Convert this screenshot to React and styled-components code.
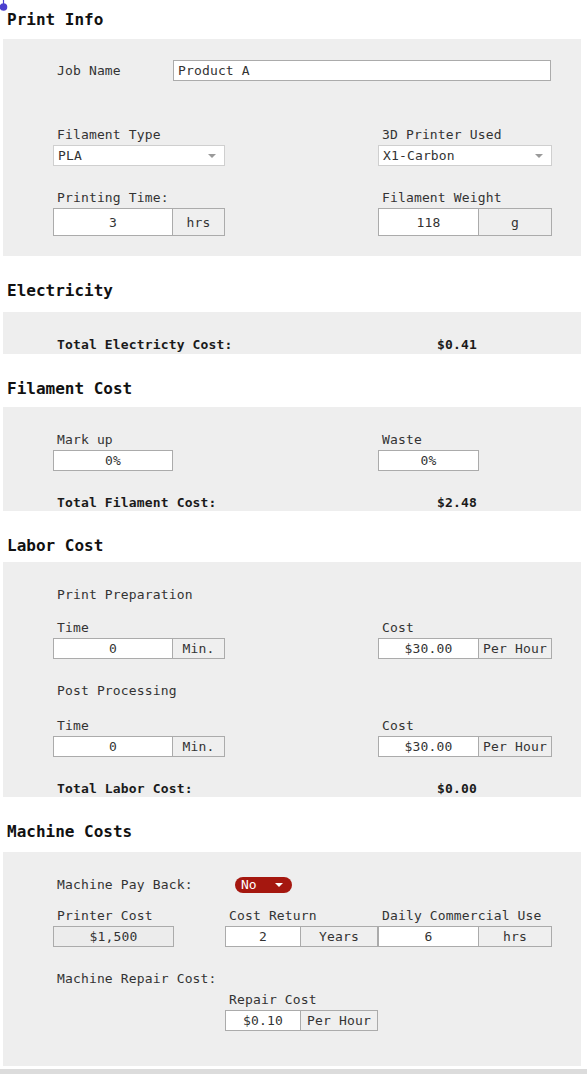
import React from "react";
import styled, { createGlobalStyle } from "styled-components";

const GlobalStyle = createGlobalStyle`
  html, body { margin: 0; padding: 0; background: #ffffff; }
  body { font-family: "DejaVu Sans Mono", "Liberation Mono", monospace; color: #333; }
`;

const Page = styled.div`
  position: relative;
  width: 587px;
  height: 1074px;
  box-sizing: border-box;
  padding: 0 6px 0 3px;
  display: flex;
  flex-direction: column;
  overflow: hidden;
`;

const Pin = styled.svg`
  position: absolute;
  left: 0;
  top: 0;
`;

const Title = styled.h2`
  margin: ${(p) => p.$top}px 0 ${(p) => p.$bottom}px 0;
  padding-left: 4px;
  font-size: 16px;
  line-height: 20px;
  font-weight: bold;
  color: #111;
`;

const Panel = styled.section`
  background: #eeeeee;
  padding: ${(p) => p.$top}px 30px ${(p) => p.$bottom}px 50px;
  display: flex;
  flex-direction: column;
`;

const Grid = styled.div`
  display: grid;
  grid-template-columns: 172px 153px 174px;
  margin-top: ${(p) => p.$mt || 0}px;
`;

const Field = styled.div`
  display: flex;
  flex-direction: column;
  grid-column: ${(p) => p.$col || "auto"};
`;

const Label = styled.div`
  box-sizing: border-box;
  padding: 1px 0 0 4px;
  font-size: 13px;
  letter-spacing: 0.15px;
  line-height: 16px;
  height: 17px;
  margin-bottom: ${(p) => (p.$mb === undefined ? 2 : p.$mb)}px;
  margin-top: ${(p) => p.$mt || 0}px;
  color: #333;
  white-space: nowrap;
`;

const InlineRow = styled.div`
  display: flex;
  align-items: center;
  margin-top: ${(p) => p.$mt || 0}px;
`;

const InlineLabel = styled(Label)`
  width: ${(p) => p.$w}px;
  margin-bottom: 0;
  flex-shrink: 0;
`;

const TextBox = styled.div`
  box-sizing: border-box;
  width: ${(p) => p.$w}px;
  height: ${(p) => p.$h || 21}px;
  border: 1px solid #ababab;
  background: ${(p) => (p.$muted ? "#ececec" : "#ffffff")};
  display: flex;
  align-items: center;
  justify-content: ${(p) => (p.$left ? "flex-start" : "center")};
  padding-left: ${(p) => (p.$left ? 4 : 0)}px;
  font-size: 13px;
  letter-spacing: 0.15px;
  color: #333;
  white-space: nowrap;
`;

const Group = styled.div`
  display: flex;
`;

const Unit = styled.div`
  box-sizing: border-box;
  width: ${(p) => p.$w}px;
  height: ${(p) => p.$h || 21}px;
  border: 1px solid #ababab;
  border-left: none;
  background: #efefef;
  display: flex;
  align-items: center;
  justify-content: center;
  font-size: 13px;
  letter-spacing: 0.15px;
  color: #333;
  white-space: nowrap;
`;

const Select = styled.div`
  box-sizing: border-box;
  width: ${(p) => p.$w}px;
  height: 21px;
  border: 1px solid #cfcfcf;
  background: #ffffff;
  display: flex;
  align-items: center;
  justify-content: space-between;
  padding: 0 8px 0 4px;
  font-size: 13px;
  letter-spacing: 0.15px;
  color: #333;
`;

const Caret = styled.span`
  width: 0;
  height: 0;
  border-left: 4px solid transparent;
  border-right: 4px solid transparent;
  border-top: 4px solid ${(p) => p.$color || "#9a9a9a"};
`;

const Pill = styled.div`
  box-sizing: border-box;
  width: 57px;
  height: 16px;
  border-radius: 8px;
  background: #a5170f;
  color: #fff;
  display: flex;
  align-items: center;
  justify-content: space-between;
  padding: 0 9px 0 6px;
  font-size: 13px;
`;

const TotalRow = styled.div`
  display: flex;
  margin-top: ${(p) => p.$mt}px;
  font-size: 13px;
  letter-spacing: 0.15px;
  line-height: 16px;
  font-weight: bold;
  color: #1a1a1a;
`;

const TotalLabel = styled.div`
  width: 380px;
  padding-left: 4px;
`;

const BottomBar = styled.div`
  margin-top: auto;
  height: 5px;
  margin-left: -3px;
  margin-right: -6px;
  background: #dcdcdc;
`;

function UnitField({ label, value, unit, vw, uw, h, col }) {
  return (
    <Field $col={col}>
      <Label>{label}</Label>
      <Group>
        <TextBox $w={vw} $h={h}>{value}</TextBox>
        <Unit $w={uw} $h={h}>{unit}</Unit>
      </Group>
    </Field>
  );
}

export default function App() {
  return (
    <>
      <GlobalStyle />
      <Page>
        <Pin width="10" height="12" viewBox="0 0 10 12">
          <line x1="3.5" y1="0" x2="3.5" y2="4" stroke="#4b3fcf" strokeWidth="1.2" />
          <circle cx="3.5" cy="7" r="3.8" fill="#4b3fcf" />
        </Pin>

        <Title $top={10} $bottom={9}>Print Info</Title>
        <Panel $top={21} $bottom={20}>
          <InlineRow>
            <InlineLabel $w={120}>Job Name</InlineLabel>
            <TextBox $w={379} $left>Product A</TextBox>
          </InlineRow>
          <Grid $mt={45}>
            <Field $col="1">
              <Label>Filament Type</Label>
              <Select $w={172}>
                PLA
                <Caret />
              </Select>
            </Field>
            <Field $col="3">
              <Label>3D Printer Used</Label>
              <Select $w={174}>
                X1-Carbon
                <Caret />
              </Select>
            </Field>
          </Grid>
          <Grid $mt={23}>
            <UnitField col="1" label="Printing Time:" value="3" unit="hrs" vw={120} uw={52} h={28} />
            <UnitField col="3" label="Filament Weight" value="118" unit="g" vw={101} uw={73} h={28} />
          </Grid>
        </Panel>

        <Title $top={25} $bottom={11}>Electricity</Title>
        <Panel $top={25} $bottom={1}>
          <TotalRow $mt={0}>
            <TotalLabel>Total Electricty Cost:</TotalLabel>
            <div>$0.41</div>
          </TotalRow>
        </Panel>

        <Title $top={25} $bottom={8}>Filament Cost</Title>
        <Panel $top={24} $bottom={0}>
          <Grid>
            <Field $col="1">
              <Label>Mark up</Label>
              <TextBox $w={120}>0%</TextBox>
            </Field>
            <Field $col="3">
              <Label>Waste</Label>
              <TextBox $w={101}>0%</TextBox>
            </Field>
          </Grid>
          <TotalRow $mt={24}>
            <TotalLabel>Total Filament Cost:</TotalLabel>
            <div>$2.48</div>
          </TotalRow>
        </Panel>

        <Title $top={25} $bottom={6}>Labor Cost</Title>
        <Panel $top={24} $bottom={0}>
          <Label $mb={0}>Print Preparation</Label>
          <Grid $mt={16}>
            <UnitField col="1" label="Time" value="0" unit="Min." vw={120} uw={52} />
            <UnitField col="3" label="Cost" value="$30.00" unit="Per Hour" vw={101} uw={73} />
          </Grid>
          <Label $mb={0} $mt={23}>Post Processing</Label>
          <Grid $mt={18}>
            <UnitField col="1" label="Time" value="0" unit="Min." vw={120} uw={52} />
            <UnitField col="3" label="Cost" value="$30.00" unit="Per Hour" vw={101} uw={73} />
          </Grid>
          <TotalRow $mt={24}>
            <TotalLabel>Total Labor Cost:</TotalLabel>
            <div>$0.00</div>
          </TotalRow>
        </Panel>

        <Title $top={25} $bottom={10}>Machine Costs</Title>
        <Panel $top={24} $bottom={35}>
          <InlineRow>
            <InlineLabel $w={182}>Machine Pay Back:</InlineLabel>
            <Pill>
              No
              <Caret $color="#ffffff" />
            </Pill>
          </InlineRow>
          <Grid $mt={14}>
            <Field $col="1">
              <Label>Printer Cost</Label>
              <TextBox $w={121} $muted>$1,500</TextBox>
            </Field>
            <UnitField col="2" label="Cost Return" value="2" unit="Years" vw={76} uw={77} />
            <UnitField col="3" label="Daily Commercial Use" value="6" unit="hrs" vw={101} uw={73} />
          </Grid>
          <Label $mb={0} $mt={23}>Machine Repair Cost:</Label>
          <Grid $mt={4}>
            <UnitField col="2" label="Repair Cost" value="$0.10" unit="Per Hour" vw={76} uw={77} />
          </Grid>
        </Panel>

        <BottomBar />
      </Page>
    </>
  );
}
